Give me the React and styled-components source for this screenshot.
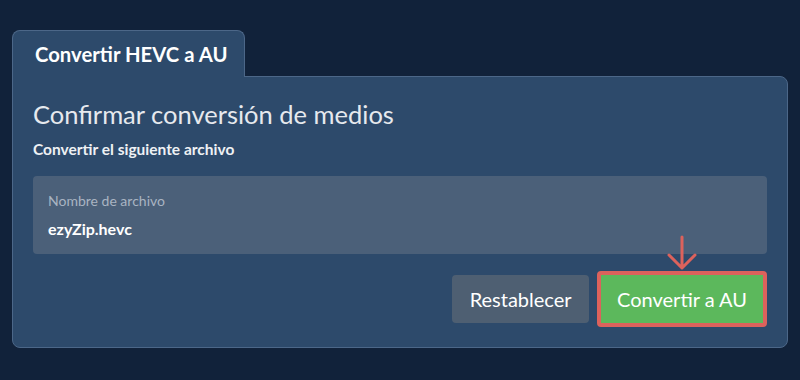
import React from "react";
import styled, { createGlobalStyle } from "styled-components";

const Global = createGlobalStyle`
  html, body { margin: 0; padding: 0; background: #11223a; }
  body { font-family: Lato, "Open Sans", sans-serif; -webkit-font-smoothing: antialiased; }
`;

const Page = styled.div`
  padding: 30px 12px 0 12px;
  height: 350px;
  box-sizing: content-box;
`;

const Tab = styled.div`
  display: inline-flex;
  align-items: center;
  height: 46px;
  padding: 0 16px 0 22px;
  background: #2d4a6b;
  border: 1px solid #4c6788;
  border-bottom: none;
  border-radius: 8px 8px 0 0;
  color: #ffffff;
  font-weight: 700;
  font-size: 20.3px;
  position: relative;
  z-index: 1;
  margin-bottom: -1px;
`;

const Panel = styled.div`
  background: #2d4a6b;
  border: 1px solid #4c6788;
  border-radius: 0 8px 8px 8px;
  padding: 21px 20px 20px 20px;
`;

const Title = styled.h2`
  margin: 0;
  font-size: 25.5px;
  font-weight: 400;
  line-height: 32px;
  color: #e6e9ee;
`;

const Subtitle = styled.p`
  margin: 9px 0 0 0;
  font-size: 15.5px;
  font-weight: 700;
  line-height: 20px;
  color: #eef1f4;
`;

const Field = styled.div`
  margin-top: 17px;
  background: #4b6079;
  border-radius: 4px;
  height: 78px;
  padding: 17px 15px 0 15px;
  box-sizing: border-box;
`;

const Label = styled.div`
  font-size: 14px;
  line-height: 16px;
  color: #a9b4c2;
`;

const Value = styled.div`
  margin-top: 10px;
  font-size: 16px;
  font-weight: 700;
  line-height: 20px;
  color: #ffffff;
`;

const Actions = styled.div`
  margin-top: 17px;
  display: flex;
  justify-content: flex-end;
  align-items: center;
  gap: 8px;
`;

const Button = styled.button`
  font-family: Lato, "Open Sans", sans-serif;
  font-size: 20px;
  font-weight: 400;
  color: #ffffff;
  height: ${(p) => (p.$highlight ? "56px" : "48px")};
  padding: 0 ${(p) => (p.$highlight ? "16px" : "17.5px")};
  border-radius: 4px;
  background: ${(p) => (p.$primary ? "#5cb85c" : "#4e5f72")};
  border: ${(p) => (p.$highlight ? "4px solid #dc625c" : "none")};
  cursor: pointer;
  position: relative;
`;

const ArrowMark = styled.svg`
  position: absolute;
  left: 50%;
  bottom: 100%;
  margin-bottom: 4px;
  transform: translateX(-50%);
  pointer-events: none;
`;

export default function App() {
  return (
    <>
      <Global />
      <Page>
        <Tab>Convertir HEVC a AU</Tab>
        <Panel>
          <Title>Confirmar conversión de medios</Title>
          <Subtitle>Convertir el siguiente archivo</Subtitle>
          <Field>
            <Label>Nombre de archivo</Label>
            <Value>ezyZip.hevc</Value>
          </Field>
          <Actions>
            <Button>Restablecer</Button>
            <Button $primary $highlight>
              <ArrowMark width="32" height="36" viewBox="0 0 32 36">
                <path
                  d="M16 2 V33 M3 20 L16 33 L29 20"
                  fill="none"
                  stroke="#dc625c"
                  strokeWidth="3"
                  strokeLinecap="round"
                  strokeLinejoin="round"
                />
              </ArrowMark>
              Convertir a AU
            </Button>
          </Actions>
        </Panel>
      </Page>
    </>
  );
}
